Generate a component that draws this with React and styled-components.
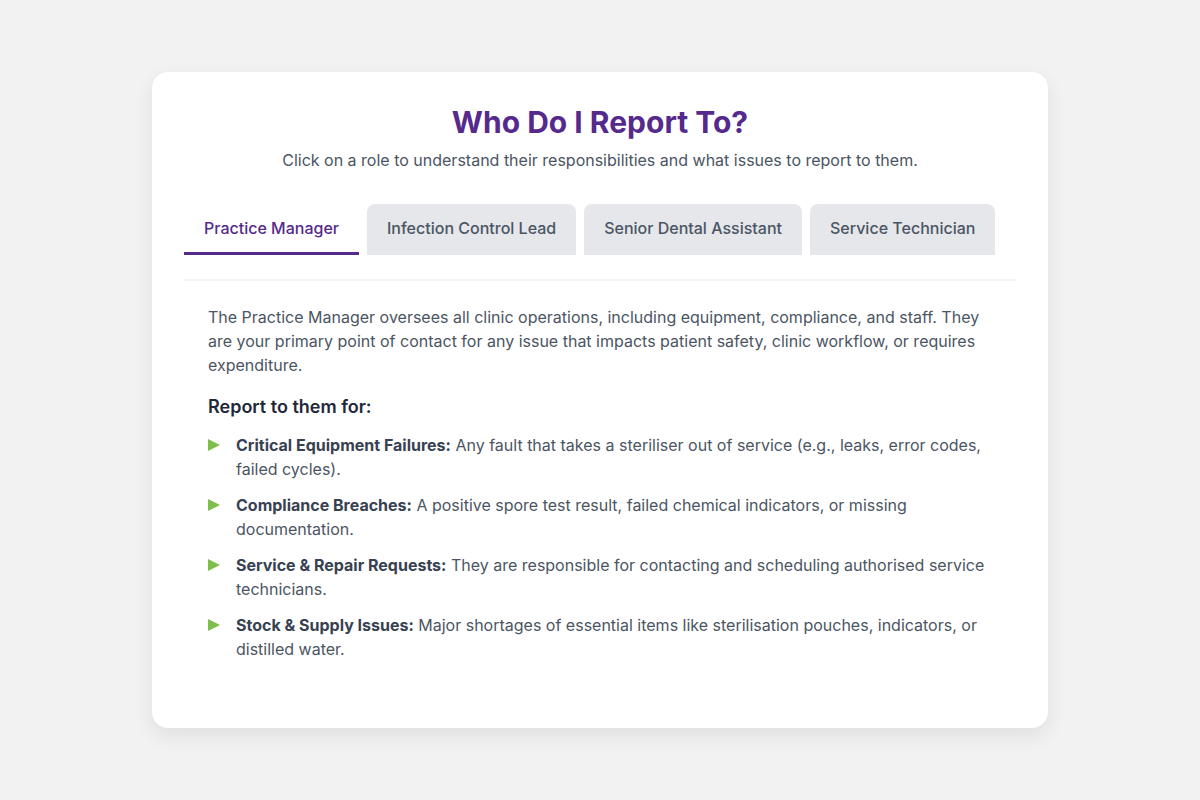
import { useState } from 'react';
import styled, { createGlobalStyle } from 'styled-components';

const roles = {
	'Practice Manager': {
		intro: 'The Practice Manager oversees all clinic operations, including equipment, compliance, and staff. They are your primary point of contact for any issue that impacts patient safety, clinic workflow, or requires expenditure.',
		items: [
			['Critical Equipment Failures:', 'Any fault that takes a steriliser out of service (e.g., leaks, error codes, failed cycles).'],
			['Compliance Breaches:', 'A positive spore test result, failed chemical indicators, or missing documentation.'],
			['Service & Repair Requests:', 'They are responsible for contacting and scheduling authorised service technicians.'],
			['Stock & Supply Issues:', 'Major shortages of essential items like sterilisation pouches, indicators, or distilled water.'],
		],
	},
	'Infection Control Lead': {
		intro: 'The Infection Control Lead ensures that all sterilisation and infection prevention procedures meet current standards and guidelines.',
		items: [
			['Protocol Questions:', 'Uncertainty about the correct procedure for processing an instrument.'],
			['Indicator Results:', 'Any unexpected change on chemical or biological indicators.'],
		],
	},
	'Senior Dental Assistant': {
		intro: 'The Senior Dental Assistant supervises daily sterilisation room tasks and supports team members with routine workflow.',
		items: [
			['Daily Workflow Issues:', 'Backlogs of instruments or delays in the reprocessing cycle.'],
			['Training Needs:', 'When you need help or a refresher on a task.'],
		],
	},
	'Service Technician': {
		intro: 'The Service Technician performs maintenance, validation and repairs on sterilisation equipment, contacted via the Practice Manager.',
		items: [
			['Scheduled Maintenance:', 'Annual validation and routine servicing of the steriliser.'],
			['Technical Repairs:', 'Diagnosis and repair of faults reported by the practice.'],
		],
	},
};

const App = () => {
	const [active, setActive] = useState('Practice Manager');
	const role = roles[active];
	return (
		<>
			<GlobalStyle />
			<Page>
				<Card>
					<Title>Who Do I Report To?</Title>
					<Subtitle>Click on a role to understand their responsibilities and what issues to report to them.</Subtitle>
					<TabBar>
						{Object.keys(roles).map((name) => (
							<Tab key={name} $active={name === active} onClick={() => setActive(name)}>
								{name}
							</Tab>
						))}
					</TabBar>
					<Panel>
						<Intro>{role.intro}</Intro>
						<ListTitle>Report to them for:</ListTitle>
						<List>
							{role.items.map(([label, text]) => (
								<Item key={label}>
									<strong>{label}</strong> {text}
								</Item>
							))}
						</List>
					</Panel>
				</Card>
			</Page>
		</>
	);
};

const GlobalStyle = createGlobalStyle`
	* { box-sizing: border-box; }
	body {
		margin: 0;
		background: #f2f2f2;
		font-family: Inter, "Noto Sans", sans-serif;
	}
`;

const Page = styled.main`
	min-height: 800px;
	display: flex;
	justify-content: center;
	padding-top: 72px;
`;

const Card = styled.section`
	width: 896px;
	height: 656px;
	background: #ffffff;
	border-radius: 16px;
	padding: 32px;
	box-shadow: 0 8px 20px rgba(0, 0, 0, 0.08);
`;

const Title = styled.h1`
	margin: 0;
	text-align: center;
	font-size: 30px;
	line-height: 36px;
	font-weight: 700;
	color: #552a8c;
`;

const Subtitle = styled.p`
	margin: 8px 0 0;
	text-align: center;
	font-size: 16px;
	line-height: 24px;
	color: #4b5563;
`;

const TabBar = styled.nav`
	display: flex;
	gap: 8px;
	margin-top: 32px;
	padding-bottom: 24px;
	border-bottom: 2px solid #f1f4f8;
`;

const Tab = styled.button`
	height: 51px;
	padding: 0 20px;
	border: none;
	border-radius: 8px 8px 0 0;
	border-bottom: 3px solid ${(p) => (p.$active ? '#552a8c' : 'transparent')};
	background: ${(p) => (p.$active ? '#ffffff' : '#e5e7eb')};
	color: ${(p) => (p.$active ? '#552a8c' : '#4b5563')};
	font-family: inherit;
	font-size: 16px;
	font-weight: 500;
	cursor: pointer;
`;

const Panel = styled.div`
	padding: 24px 24px 0;
`;

const Intro = styled.p`
	margin: 0;
	font-size: 16px;
	line-height: 24px;
	color: #4b5563;
`;

const ListTitle = styled.h3`
	margin: 16px 0 0;
	font-size: 18px;
	line-height: 28px;
	font-weight: 600;
	color: #1f2937;
`;

const List = styled.ul`
	list-style: none;
	margin: 12px 0 0;
	padding: 0;
	display: flex;
	flex-direction: column;
	gap: 12px;
`;

const Item = styled.li`
	position: relative;
	padding-left: 28px;
	font-size: 16px;
	line-height: 24px;
	color: #4b5563;

	strong {
		font-weight: 700;
		color: #374151;
	}

	&::before {
		content: '';
		position: absolute;
		left: 0;
		top: 6px;
		border-style: solid;
		border-width: 6.5px 0 6.5px 12px;
		border-color: transparent transparent transparent #7cc04b;
	}
`;

export default App;
